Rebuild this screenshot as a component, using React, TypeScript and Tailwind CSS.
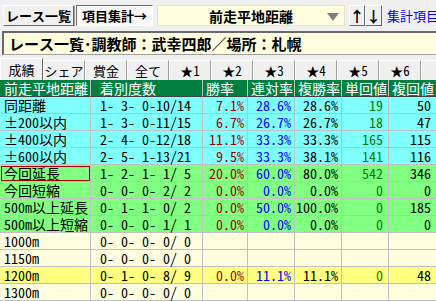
import React from "react";

const F = "font-['Noto_Sans_Mono_CJK_JP','Noto_Sans_CJK_JP',monospace]";

type Row = {
  name: string;
  cnt: string;
  w?: string;
  r?: string;
  f?: string;
  t?: string;
  fk?: string;
  bg: string;
  sel?: boolean;
};

const rows: Row[] = [
  { name: "同距離", cnt: "1- 3- 0-10/14", w: "7.1%", r: "28.6%", f: "28.6%", t: "19", fk: "50", bg: "bg-[#80ffff]" },
  { name: "±200以内", cnt: "1- 3- 0-11/15", w: "6.7%", r: "26.7%", f: "26.7%", t: "18", fk: "47", bg: "bg-[#80ffff]" },
  { name: "±400以内", cnt: "2- 4- 0-12/18", w: "11.1%", r: "33.3%", f: "33.3%", t: "165", fk: "115", bg: "bg-[#80ffff]" },
  { name: "±600以内", cnt: "2- 5- 1-13/21", w: "9.5%", r: "33.3%", f: "38.1%", t: "141", fk: "116", bg: "bg-[#80ffff]" },
  { name: "今回延長", cnt: "1- 2- 1- 1/ 5", w: "20.0%", r: "60.0%", f: "80.0%", t: "542", fk: "346", bg: "bg-[#80ff80]", sel: true },
  { name: "今回短縮", cnt: "0- 0- 0- 2/ 2", w: "0.0%", r: "0.0%", f: "0.0%", t: "0", fk: "0", bg: "bg-[#80ff80]" },
  { name: "500m以上延長", cnt: "0- 1- 1- 0/ 2", w: "0.0%", r: "50.0%", f: "100.0%", t: "0", fk: "185", bg: "bg-[#80ff80]" },
  { name: "500m以上短縮", cnt: "0- 0- 0- 1/ 1", w: "0.0%", r: "0.0%", f: "0.0%", t: "0", fk: "0", bg: "bg-[#80ff80]" },
  { name: "1000m", cnt: "0- 0- 0- 0/ 0", bg: "bg-[#ffffe0]" },
  { name: "1150m", cnt: "0- 0- 0- 0/ 0", bg: "bg-[#ffffe0]" },
  { name: "1200m", cnt: "0- 1- 0- 8/ 9", w: "0.0%", r: "11.1%", f: "11.1%", t: "0", fk: "48", bg: "bg-[#ffff80]" },
  { name: "1300m", cnt: "0- 0- 0- 0/ 0", bg: "bg-[#ffffe0]" },
];

const tabs = ["シェア", "賞金", "全て", "★1", "★2", "★3", "★4", "★5", "★6", "★"];

const cols = "grid grid-cols-[91px_112px_45px_47px_47px_47px_60px]";

export default function App() {
  return (
    <div className={`w-[436px] h-[301px] overflow-hidden bg-[#f0f0f0] ${F} text-black`}>
      {/* top bar */}
      <div className="flex items-center h-[26px] pt-[5px] pl-[3px] overflow-hidden">
        <div className="shrink-0 w-[71px] h-[21px] flex items-center justify-center bg-[#f0f0f0] border border-t-white border-l-white border-r-[#696969] border-b-[#696969] shadow-[1px_1px_0_#a0a0a0] text-[13px] font-bold leading-none">
          レース一覧
        </div>
        <div className="shrink-0 ml-[2px] w-[77px] h-[21px] flex items-center justify-center bg-[#f8f8f8] border border-t-[#696969] border-l-[#696969] border-r-white border-b-white text-[13px] font-bold leading-none">
          項目集計→
        </div>
        <div className="shrink-0 ml-[4px] w-[188px] h-[21px] relative flex items-center justify-center bg-[#ffffe0] border border-[#e4e4d0] text-[14px] font-bold leading-none">
          <span>前走平地距離</span>
          <svg className="absolute right-[5px] top-[7px]" width="12" height="8" viewBox="0 0 12 8">
            <polygon points="0,0 12,0 6,8" fill="#808080" />
          </svg>
        </div>
        <div className="shrink-0 ml-[4px] w-[16px] h-[21px] flex items-center justify-center bg-[#f0f0f0] border border-t-white border-l-white border-r-[#696969] border-b-[#696969] text-[15px] font-bold leading-none">
          ↑
        </div>
        <div className="shrink-0 w-[17px] h-[21px] flex items-center justify-center bg-[#f0f0f0] border border-t-white border-l-white border-r-[#696969] border-b-[#696969] text-[15px] font-bold leading-none">
          ↓
        </div>
        <div className="shrink-0 ml-[5px] text-[13px] text-[#0000ff] whitespace-nowrap leading-none">集計項目…</div>
      </div>

      {/* title bar */}
      <div className="mt-[5px] ml-[2px] h-[24px] flex items-center bg-[#ffffe0] border-t-2 border-l-2 border-t-[#696969] border-l-[#696969] border-b border-b-[#a0a0a0] pl-[5px] text-[15px] font-bold leading-none whitespace-nowrap">
        レース一覧･調教師：武幸四郎／場所：札幌
      </div>

      {/* tabs */}
      <div className="h-[25px] flex items-end overflow-hidden">
        <div className="shrink-0 w-[43px] h-[22px] flex items-center justify-center bg-[#f0f0f0] border-t border-l border-white border-r border-r-[#696969] text-[13px] leading-none">
          成績
        </div>
        {tabs.map((t, i) => (
          <div
            key={i}
            className="shrink-0 w-[42px] h-[20px] flex items-center justify-center bg-[#f0f0f0] border-t border-l border-white border-r border-r-[#a0a0a0] text-[13px] leading-none whitespace-nowrap"
          >
            {t}
          </div>
        ))}
      </div>

      {/* table header */}
      <div className={`${cols} h-[17px] bg-[#008040] text-white text-[14px] leading-none`}>
        {["前走平地距離", "着別度数", "勝率", "連対率", "複勝率", "単回値", "複回値"].map((h, i) => (
          <div key={i} className={`flex items-center border-r border-[#c0c0c0] border-b border-b-[#404040] ${i === 0 ? "pl-[4px]" : i === 1 ? "pl-[9px]" : "pl-[3px]"} whitespace-nowrap`}>
            {h}
          </div>
        ))}
      </div>

      {/* rows */}
      {rows.map((r, i) => (
        <div key={i} className={`${cols} h-[17px] ${r.bg} text-[14px] leading-none whitespace-pre`}>
          <div className={`flex items-center border-r border-b border-[#c0c0c0] pl-[4px] ${r.sel ? "outline outline-[1.5px] outline-[#a00000] -outline-offset-[2px]" : ""}`}>
            {r.name}
          </div>
          <div className="flex items-center border-r border-b border-[#c0c0c0] pl-[9px]">{r.cnt}</div>
          <div className="flex items-center justify-end border-r border-b border-[#c0c0c0] pr-[3px] text-[#a00000]">{r.w ?? ""}</div>
          <div className="flex items-center justify-end border-r border-b border-[#c0c0c0] pr-[3px] text-[#0000ff]">{r.r ?? ""}</div>
          <div className="flex items-center justify-end border-r border-b border-[#c0c0c0] pr-[3px]">{r.f ?? ""}</div>
          <div className="flex items-center justify-end border-r border-b border-[#c0c0c0] pr-[5px] text-[#008000]">{r.t ?? ""}</div>
          <div className="flex items-center justify-end border-r border-b border-[#c0c0c0] pr-[17px]">{r.fk ?? ""}</div>
        </div>
      ))}
    </div>
  );
}
